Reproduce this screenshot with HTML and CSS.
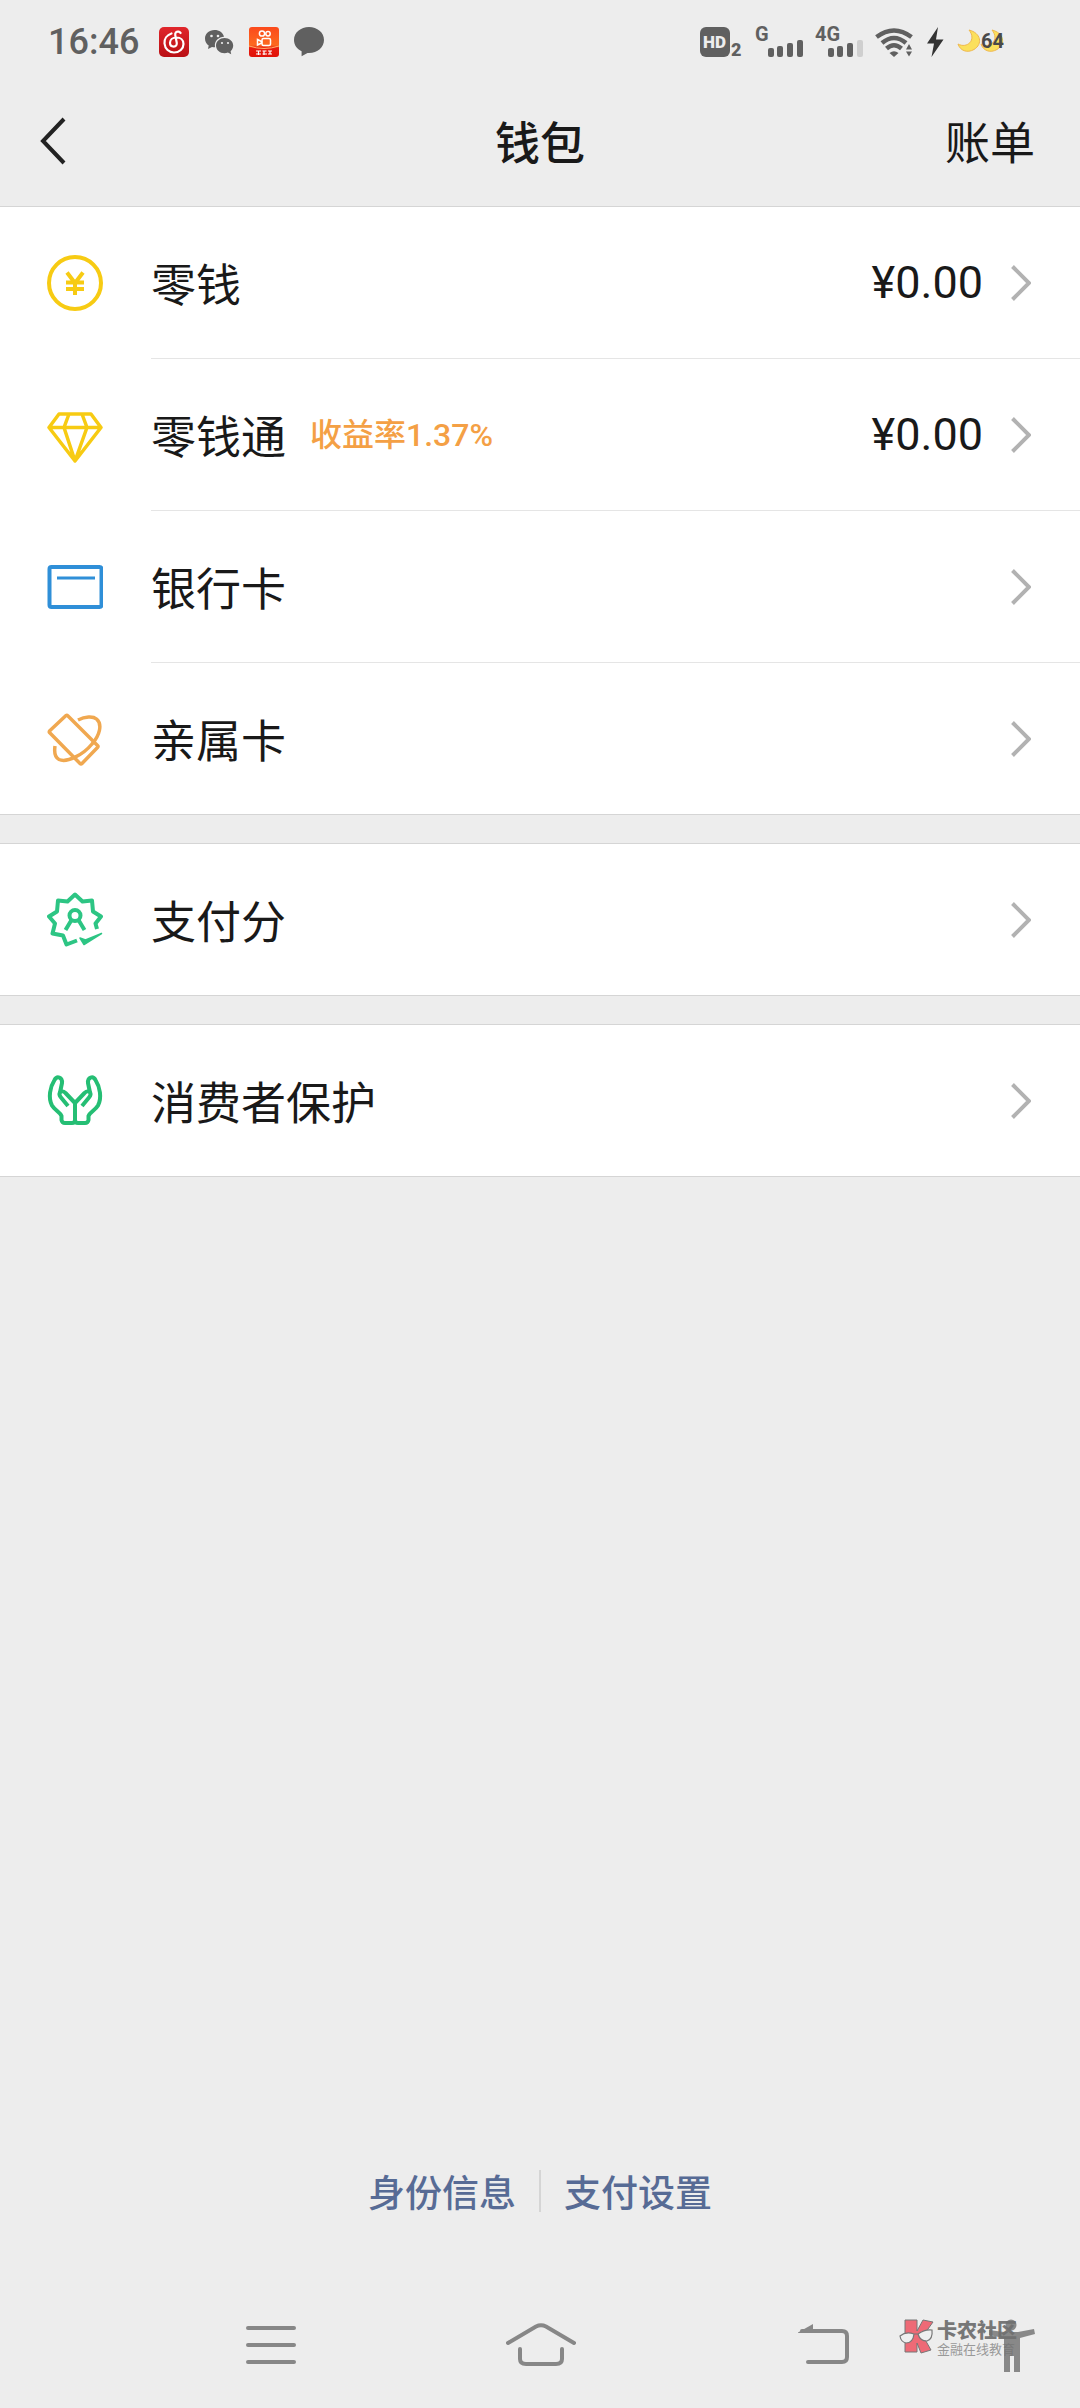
FILE: index.html
```html
<!DOCTYPE html>
<html lang="zh">
  <head>
    <meta charset="UTF-8" />
    <meta name="viewport" content="width=device-width, initial-scale=1.0" />
    <title>钱包</title>
    <link rel="stylesheet" href="styles.css">
  </head>
  <body>
    <!-- 状态栏 -->
    <div class="status-bar">
      <div class="status-left">
        <span class="time">16:46</span>
        <div class="app-icons">
          <svg width="30" height="30" viewBox="0 0 30 30">
            <defs>
              <linearGradient id="red" x1="0" y1="0" x2="0" y2="1">
                <stop offset="0" stop-color="#e0262b" />
                <stop offset="1" stop-color="#b90f14" />
              </linearGradient>
              <linearGradient id="orange" x1="0" y1="0" x2="0" y2="1">
                <stop offset="0" stop-color="#fb4a1c" />
                <stop offset="0.6" stop-color="#fd6a1f" />
                <stop offset="0.7" stop-color="#e81c10" />
                <stop offset="1" stop-color="#e01208" />
              </linearGradient>
            </defs>
            <rect width="30" height="30" rx="5" fill="url(#red)" />
            <path d="M12.5 6.5C8 8 5 12 5.500 16.500C6 22 10 25.500 15 25.500C20.500 25.500 24.500 21.500 24.500 17C24.500 13 21.500 10.500 17.500 10.500C13.500 10.500 11 13 11 15.800C11 18.300 12.800 19.600 14.700 19.600C17 19.600 18.200 17.800 17.700 15.500L16.300 8.500C15.700 5.500 17.700 4.300 19.500 4.600C20.500 4.800 21 5.300 21.600 6" fill="none" stroke="#fff" stroke-width="2.200" stroke-linecap="round" />
          </svg>
          <svg width="30" height="30" viewBox="0 0 30 30" fill="#606060">
            <path d="M10.500 3C4.900 3 1 6.800 1 11.500C1 14.500 2.400 16.900 4.700 18.500L4 22L8 20C9.200 20.200 10.200 20.300 11 20.200C10 13.600 15 10 20 9.800C19 5.700 15.200 3 10.500 3Z" />
            <path d="M20.500 11C16 11 12 14.200 12 18.500C12 23 16 26.200 20.500 26.200C21.700 26.200 22.800 26 23.900 25.600L27.200 27.200L26.600 24.200C28.300 22.700 29.200 20.800 29.200 18.600C29.200 14.300 25.200 11 20.500 11Z" />
            <g fill="#ededed">
              <circle cx="7.500" cy="9" r="1.300" />
              <circle cx="14" cy="9" r="1.300" />
              <circle cx="18" cy="16" r="1.100" />
              <circle cx="24" cy="16" r="1.100" />
            </g>
          </svg>
          <svg width="30" height="30" viewBox="0 0 30 30">
            <rect width="30" height="30" rx="3" fill="url(#orange)" />
            <path d="M0 19Q15 24 30 19" fill="none" stroke="#ffb06a" stroke-width="1" />
            <g fill="none" stroke="#fff" stroke-width="1.500">
              <circle cx="13" cy="6.500" r="2.600" />
              <circle cx="19" cy="6.800" r="2.200" />
              <rect x="13" y="11.500" width="8.500" height="7" rx="1.500" />
              <path d="M8.500 12.500L12.500 14.500V16L8.500 18Z" />
              <path d="M7 24H12M7 27H12M9.500 24V28M13.500 24H17.500M15 24V28M13.500 27H18M19 24H23M21 24V27M19 27H23" stroke-width="1.200" />
            </g>
          </svg>
          <svg width="30" height="30" viewBox="0 0 30 30">
            <path d="M15 0C6.700 0 0 5.500 0 13C0 18 3 22 7.600 24.300V29.300L13.500 26C23 26.700 30 20.500 30 13C30 5.500 23.300 0 15 0Z" fill="#606060" />
          </svg>
        </div>
      </div>
      <div class="status-right">
        <svg width="44" height="44" viewBox="0 -7 44 44" fill="#606060">
          <rect x="1" width="30" height="30" rx="6" />
          <text class="tag-hd" x="4" y="21" fill="#ededed">HD</text>
          <text class="tag-sim" x="32" y="29">2</text>
        </svg>
        <svg width="48" height="44" viewBox="0 -7 48 44" fill="#606060">
          <text class="tag-net" x="0" y="14">G</text>
          <rect x="13" y="21" width="6" height="9" rx="2" />
          <rect x="22" y="19" width="6" height="11" rx="2" />
          <rect x="32" y="16" width="6" height="14" rx="2" />
          <rect x="42" y="13" width="6" height="17" rx="2" />
        </svg>
        <svg width="48" height="44" viewBox="0 -7 48 44" fill="#606060">
          <text class="tag-net" x="0" y="14">4G</text>
          <rect x="13" y="21" width="6" height="9" rx="2" />
          <rect x="22" y="19" width="6" height="11" rx="2" />
          <rect x="32" y="16" width="6" height="14" rx="2" />
          <rect x="42" y="13" width="6" height="17" rx="2" fill="#cfcfcf" />
        </svg>
        <svg width="38" height="30" viewBox="0 0 38 30">
          <g fill="none" stroke="#606060" stroke-width="4.500">
            <path d="M1.500 10Q19 -3 36.500 10" />
            <path d="M7 16Q19 6 31 16" />
            <path d="M11.500 21.500Q19 15 26.500 21.500" />
          </g>
          <path d="M14.500 26Q19 22.500 23.500 26L19 30Z" fill="#606060" />
          <path d="M31 22.500L34 17L37 22.500ZM31 24.500H37L34 29.500Z" fill="#606060" />
        </svg>
        <svg width="20" height="30" viewBox="0 0 20 30">
          <path d="M13 0L2 16.500H9L6.500 30L18.500 12.500H11Z" fill="#333" />
        </svg>
        <svg width="47" height="30" viewBox="0 0 47 30">
          <g fill="#fbe05c" stroke="#efb84e" stroke-width="1">
            <path d="M12 3C24 6 26 17 17 22.500C10 26.500 3 23.500 1 17C10 22 20 13 12 3Z" />
            <path d="M35 3C47 6 49 17 40 22.500C33 26.500 26 23.500 24 17C33 22 43 13 35 3Z" />
          </g>
          <text class="battery" x="24" y="21" fill="#4a4a4a">64</text>
        </svg>
      </div>
    </div>

    <!-- 标题栏 -->
    <header class="header">
      <button class="back" type="button" aria-label="返回">
        <svg width="28" height="48" viewBox="0 0 28 48">
          <path d="M24 2L3 24L24 46" fill="none" stroke="#222" stroke-width="4" />
        </svg>
      </button>
      <h1 class="title">钱包</h1>
      <a class="bill" href="#">账单</a>
    </header>

    <main class="wallet">
      <section class="group">
        <a class="row" href="#">
          <svg class="row-icon yellow" viewBox="0 0 56 56">
            <circle cx="28" cy="28" r="26" />
            <path d="M20 17.500L28 28L36 17.500M28 28V40M19 27.500H37M19 34H37" />
          </svg>
          <div class="row-body">
            <span class="name">零钱</span>
            <span class="amount">¥0.00</span>
            <svg class="arrow" viewBox="0 0 20 36"><path d="M1.500 1.500L18 18L1.500 34.500" /></svg>
          </div>
        </a>
        <a class="row" href="#">
          <svg class="row-icon yellow thin" viewBox="0 0 56 56">
            <path d="M12 7H44L54 20.500L28 54L2 20.500ZM2 20.500H54M22 7L17 20.500L28 54L40 20.500L35 7" />
          </svg>
          <div class="row-body">
            <span class="name">零钱通</span>
            <span class="rate">收益率1.37%</span>
            <span class="amount">¥0.00</span>
            <svg class="arrow" viewBox="0 0 20 36"><path d="M1.500 1.500L18 18L1.500 34.500" /></svg>
          </div>
        </a>
        <a class="row" href="#">
          <svg class="row-icon blue" viewBox="0 0 56 56">
            <rect x="2.500" y="8" width="52" height="40" rx="2" />
            <path d="M10 19H48" stroke-width="3" />
          </svg>
          <div class="row-body">
            <span class="name">银行卡</span>
            <svg class="arrow" viewBox="0 0 20 36"><path d="M1.500 1.500L18 18L1.500 34.500" /></svg>
          </div>
        </a>
        <a class="row" href="#">
          <svg class="row-icon orange thin" viewBox="0 0 56 56">
            <path d="M19 4.500Q20 4 21 5L50.500 34.500Q51.500 35.500 50.500 36.500L35 52.500Q34 53.500 33 52.500L2.500 21.500Q2 21 2.500 20Z" />
            <path d="M31 9C38 5.500 46 5 49.500 8C55.500 13 53 24 45 33C36 44 20 52 12 48.500C8 46.500 7 42 8 35" />
          </svg>
          <div class="row-body">
            <span class="name">亲属卡</span>
            <svg class="arrow" viewBox="0 0 20 36"><path d="M1.500 1.500L18 18L1.500 34.500" /></svg>
          </div>
        </a>
      </section>

      <section class="group">
        <a class="row" href="#">
          <svg class="row-icon mint" viewBox="0 0 56 56">
            <path d="M50 37L48.500 31.500L54 24.500L46 19.500L45 8.500L35.500 9.500L28 2.500L20.500 9.500L11 8.500L10 19.500L2 24.500L8 31.500L5.500 41.500L16 43.500L19.500 52.500L30 48.500" />
            <circle cx="28" cy="23.500" r="5.500" />
            <path d="M24.500 28L18.500 38M31.500 28L37.500 38" />
            <path d="M33 46L37 52.500L54.500 41.500L38.500 48Z" fill="#2dc584" stroke-width="1.500" />
          </svg>
          <div class="row-body">
            <span class="name">支付分</span>
            <svg class="arrow" viewBox="0 0 20 36"><path d="M1.500 1.500L18 18L1.500 34.500" /></svg>
          </div>
        </a>
      </section>

      <section class="group">
        <a class="row" href="#">
          <svg class="row-icon green" viewBox="0 0 56 56">
            <g>
              <path d="M28 48V30L18.500 20Q15 17 13 19.500Q11.500 21.500 14 24.500L21 33" />
              <path d="M13 19.500L15 10C15.500 4 10 2.500 7.500 7C3 14 1 25 5 32.500C8 37.500 13 39 14.500 43V47Q15 50 18 50H25Q28 50 28 47" />
            </g>
            <g transform="translate(56 0) scale(-1 1)">
              <path d="M28 48V30L18.500 20Q15 17 13 19.500Q11.500 21.500 14 24.500L21 33" />
              <path d="M13 19.500L15 10C15.500 4 10 2.500 7.500 7C3 14 1 25 5 32.500C8 37.500 13 39 14.500 43V47Q15 50 18 50H25Q28 50 28 47" />
            </g>
          </svg>
          <div class="row-body">
            <span class="name">消费者保护</span>
            <svg class="arrow" viewBox="0 0 20 36"><path d="M1.500 1.500L18 18L1.500 34.500" /></svg>
          </div>
        </a>
      </section>
    </main>

    <!-- 底部链接 -->
    <footer class="links">
      <a href="#">身份信息</a>
      <a href="#">支付设置</a>
    </footer>

    <!-- 系统导航键 -->
    <nav class="nav-bar">
      <button type="button" aria-label="菜单">
        <svg width="50" height="44" viewBox="0 0 50 44">
          <path d="M2 5H48M2 22H48M2 39H48" />
        </svg>
      </button>
      <button type="button" aria-label="主页">
        <svg width="70" height="44" viewBox="0 0 70 44">
          <path d="M2 20L30 3.500Q35 1 40 3.500L68 20M14 26V36Q14 41 20 41H50Q56 41 56 36V26" />
        </svg>
      </button>
      <button type="button" aria-label="后退">
        <svg width="63" height="44" viewBox="0 0 63 44">
          <path d="M16 8H56Q61 8 61 13V34Q61 39 56 39H22" />
          <path class="tip" d="M12 9.500L27 1V10H12Z" />
        </svg>
      </button>
    </nav>

    <!-- 水印 -->
    <div class="watermark">
      <svg width="36" height="36" viewBox="0 0 36 36">
        <path d="M6 1H18V12L24 1L34 3L24 17L32 31L22 34L18 24V33H6Z" fill="#ee6a76" stroke="#777" stroke-width="1" />
        <path d="M1 17Q7 12 15 15Q14 24 7 24Q2 23 1 17ZM19 15Q26 10 33 11Q34 20 28 22Q21 22 19 15ZM15 15L19 15" fill="#efefef" stroke="#777" stroke-width="1.200" />
      </svg>
      <div class="watermark-text">
        <strong>卡农社区</strong>
        <span>金融在线教育</span>
      </div>
      <svg class="person" width="46" height="54" viewBox="0 0 46 54">
        <circle cx="22" cy="6" r="5.500" />
        <path d="M0 11L15 13H29L45 10L46 15L31 19V53H25V37H21V53H15V19L0 16Z" />
      </svg>
    </div>
  </body>
</html>
```

FILE: styles.css
```css
:root {
  --bg: #ededed;
  --text: #191919;
  --gray: #606060;
  --line: #d5d5d5;
  --line-light: #e5e5e5;
  --link: #576b95;
  --cjk: "Noto Sans CJK SC", sans-serif;
}

* {
  margin: 0;
  padding: 0;
  box-sizing: border-box;
}

body {
  font-family: Roboto, "Noto Sans CJK SC", sans-serif;
  background-color: var(--bg);
  color: var(--text);
  min-height: 100vh;
  display: flex;
  flex-direction: column;
  position: relative;
}

a {
  color: inherit;
  text-decoration: none;
}

button {
  border: none;
  background: none;
}

svg {
  display: block;
  flex-shrink: 0;
}

/* 状态栏 */
.status-bar {
  height: 76px;
  padding: 8px 76px 0 48px;
  display: flex;
  justify-content: space-between;
  align-items: center;
}

.status-left,
.status-right,
.app-icons {
  display: flex;
  align-items: center;
}

.status-left {
  gap: 20px;
}

.app-icons {
  gap: 15px;
}

.status-right {
  gap: 12px;
}

.time {
  font-size: 36px;
  font-weight: 500;
  line-height: 36px;
  color: var(--gray);
}

.tag-hd {
  font-size: 17px;
  font-weight: 900;
}

.tag-sim {
  font-size: 18px;
  font-weight: 900;
}

.tag-net {
  font-size: 20px;
  font-weight: 700;
}

.battery {
  font-size: 20px;
  font-weight: 700;
}

/* 标题栏 */
.header {
  height: 130px;
  padding: 0 40px;
  display: grid;
  grid-template-columns: 1fr auto 1fr;
  align-items: center;
}

.title,
.bill {
  font-family: var(--cjk);
  font-size: 45px;
  line-height: 64px;
}

.title {
  font-weight: 500;
}

.back {
  justify-self: start;
}

.bill {
  justify-self: end;
  padding-right: 5px;
}

/* 列表 */
.wallet {
  flex: 1;
  display: flex;
  flex-direction: column;
  gap: 28px;
}

.group {
  background: #fff;
  border-top: 1px solid var(--line);
  border-bottom: 1px solid var(--line);
}

.row {
  display: flex;
  align-items: center;
  gap: 48px;
  padding-left: 47px;
}

.row-body {
  flex: 1;
  height: 152px;
  padding-right: 49px;
  display: flex;
  align-items: center;
  border-bottom: 1px solid var(--line-light);
}

.row:last-child .row-body {
  height: 151px;
  border-bottom: none;
}

.row-icon {
  width: 56px;
  height: 56px;
  fill: none;
  stroke-width: 4;
  stroke-linejoin: round;
}

.yellow {
  stroke: #f7cb13;
}

.blue {
  stroke: #2f8fd8;
}

.orange {
  stroke: #f0a850;
}

.mint {
  stroke: #2dc584;
}

.green {
  stroke: #25be74;
}

.thin {
  stroke-width: 3.500;
}

.name {
  font-family: var(--cjk);
  font-size: 45px;
  line-height: 64px;
}

.rate {
  margin-left: 24px;
  font-size: 32px;
  font-weight: 500;
  line-height: 48px;
  color: #f4a045;
}

.amount {
  margin-left: auto;
  font-size: 45px;
  line-height: 64px;
}

.arrow {
  width: 20px;
  height: 36px;
  margin-left: auto;
  fill: none;
  stroke: #b2b2b2;
  stroke-width: 4;
}

.amount + .arrow {
  margin-left: 28px;
}

/* 底部链接 */
.links {
  display: flex;
  justify-content: center;
  margin-bottom: 70px;
  font-family: var(--cjk);
  font-size: 37px;
  font-weight: 500;
  line-height: 42px;
  color: var(--link);
}

.links a {
  padding: 0 23px;
}

.links a + a {
  border-left: 2px solid var(--line);
}

/* 系统导航键 */
.nav-bar {
  height: 126px;
  display: flex;
  justify-content: center;
  align-items: center;
  gap: 210px;
  padding-left: 15px;
}

.nav-bar path {
  fill: none;
  stroke: #878787;
  stroke-width: 4;
  stroke-linecap: round;
}

.nav-bar .tip {
  fill: #878787;
  stroke: none;
}

/* 水印 */
.watermark {
  position: absolute;
  right: 45px;
  bottom: 35px;
  width: 136px;
  height: 54px;
  display: flex;
  align-items: flex-start;
  gap: 2px;
}

.watermark-text {
  display: flex;
  flex-direction: column;
  white-space: nowrap;
  color: #777;
}

.watermark-text strong {
  font-size: 20px;
  font-weight: 900;
  line-height: 24px;
}

.watermark-text span {
  font-size: 13px;
  line-height: 14px;
  color: #999;
}

.person {
  position: absolute;
  right: 0;
  top: 0;
  fill: #707070;
  opacity: 0.8;
}
```
